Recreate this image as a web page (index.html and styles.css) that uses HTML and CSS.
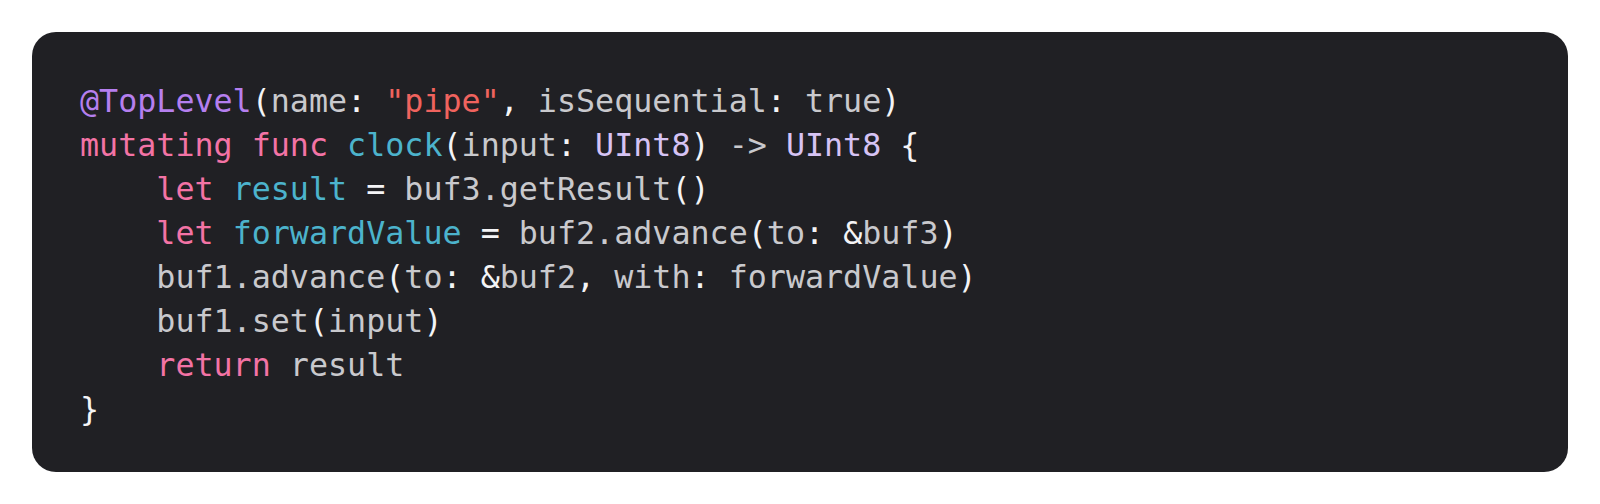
FILE: index.html
```html
<!DOCTYPE html>
<html lang="en">
<head>
<meta charset="utf-8">
<title>Code</title>
<link rel="stylesheet" href="styles.css">
</head>
<body>
<div class="code-card">
<pre class="code"><code><span class="attr">@TopLevel</span><span class="p">(</span>name<span class="p">:</span> <span class="str">"pipe"</span><span class="p">,</span> isSequential<span class="p">:</span> true<span class="p">)</span>
<span class="kw">mutating</span> <span class="kw">func</span> <span class="fn">clock</span><span class="p">(</span>input<span class="p">:</span> <span class="ty">UInt8</span><span class="p">)</span> -&gt; <span class="ty">UInt8</span> <span class="p">{</span>
    <span class="kw">let</span> <span class="fn">result</span> <span class="p">=</span> buf3.getResult<span class="p">()</span>
    <span class="kw">let</span> <span class="fn">forwardValue</span> <span class="p">=</span> buf2.advance<span class="p">(</span>to<span class="p">:</span> <span class="p">&amp;</span>buf3<span class="p">)</span>
    buf1.advance<span class="p">(</span>to<span class="p">:</span> <span class="p">&amp;</span>buf2<span class="p">,</span> with<span class="p">:</span> forwardValue<span class="p">)</span>
    buf1.set<span class="p">(</span>input<span class="p">)</span>
    <span class="kw">return</span> result
<span class="p">}</span></code></pre>
</div>
</body>
</html>
```
FILE: styles.css
```css
html, body {
  margin: 0;
  background: #ffffff;
}
body {
  padding: 32px;
}
.code-card {
  background: #202024;
  border-radius: 24px;
  padding: 47px 48px 41px;
}
.code {
  margin: 0;
  font-family: "DejaVu Sans Mono", "Liberation Mono", monospace;
  font-size: 31.7px;
  line-height: 44px;
  color: #c9c9cd;
  white-space: pre;
}
.code code {
  font-family: inherit;
}
.attr { color: #b57fef; }
.str { color: #f0635e; }
.kw { color: #f373a5; }
.fn { color: #4cb3cc; }
.ty { color: #d6c3f4; }
.p { color: #f4f4f6; }
```
